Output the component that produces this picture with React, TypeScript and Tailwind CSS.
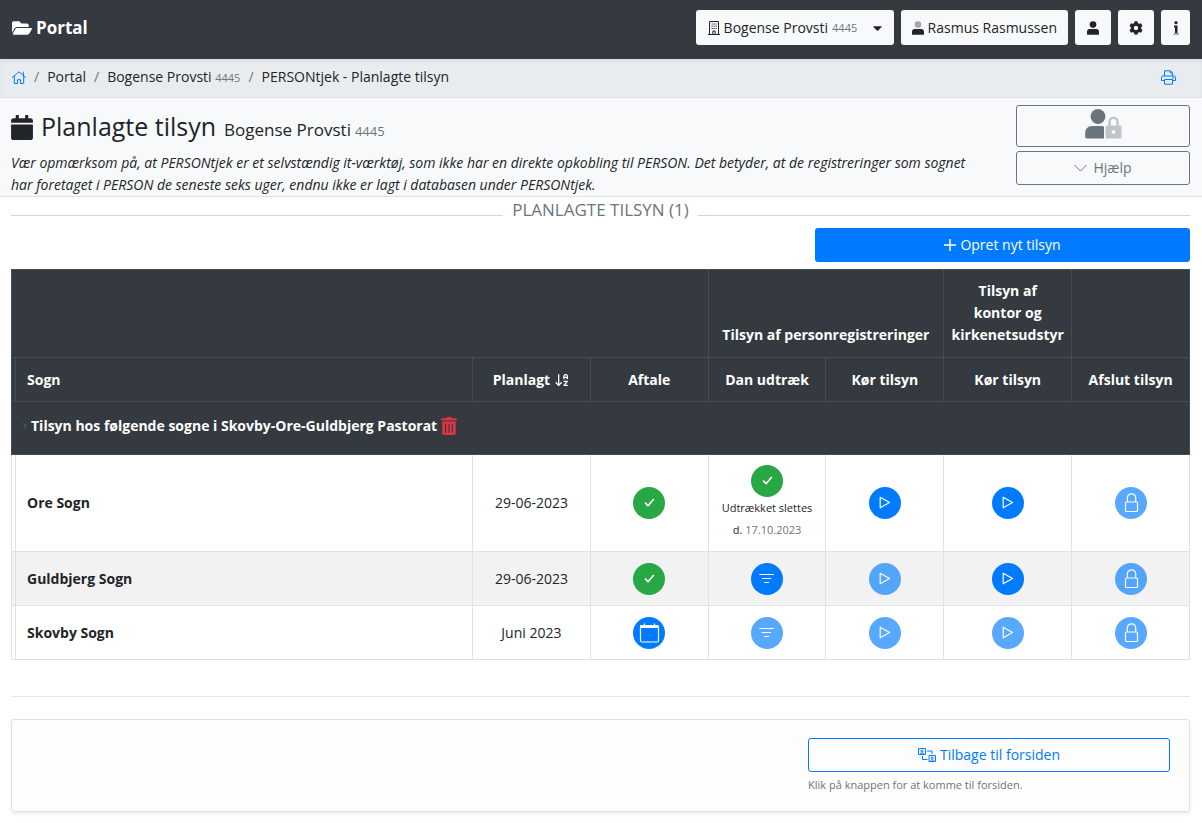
import React from 'react';
import { ArrowDownAZ } from 'lucide-react';
import { FaCalendar, FaCaretDown, FaCog, FaFolderOpen, FaTrashAlt } from 'react-icons/fa';

type ActionKind = 'check' | 'filter' | 'calendar' | 'play' | 'lock';

interface Action {
  kind: ActionKind;
  label: string;
  disabled?: boolean;
  note?: string;
}

interface Parish {
  name: string;
  planned: string;
  actions: Action[];
}

const parishes: Parish[] = [
  {
    name: 'Ore Sogn',
    planned: '29-06-2023',
    actions: [
      { kind: 'check', label: 'Aftale' },
      { kind: 'check', label: 'Dan udtræk', note: '17.10.2023' },
      { kind: 'play', label: 'Kør tilsyn af personregistreringer' },
      { kind: 'play', label: 'Kør tilsyn af kontor' },
      { kind: 'lock', label: 'Afslut tilsyn', disabled: true },
    ],
  },
  {
    name: 'Guldbjerg Sogn',
    planned: '29-06-2023',
    actions: [
      { kind: 'check', label: 'Aftale' },
      { kind: 'filter', label: 'Dan udtræk' },
      { kind: 'play', label: 'Kør tilsyn af personregistreringer', disabled: true },
      { kind: 'play', label: 'Kør tilsyn af kontor' },
      { kind: 'lock', label: 'Afslut tilsyn', disabled: true },
    ],
  },
  {
    name: 'Skovby Sogn',
    planned: 'Juni 2023',
    actions: [
      { kind: 'calendar', label: 'Aftale' },
      { kind: 'filter', label: 'Dan udtræk', disabled: true },
      { kind: 'play', label: 'Kør tilsyn af personregistreringer', disabled: true },
      { kind: 'play', label: 'Kør tilsyn af kontor', disabled: true },
      { kind: 'lock', label: 'Afslut tilsyn', disabled: true },
    ],
  },
];

const UserIcon = ({ className, head = 'currentColor' }: { className: string; head?: string }) => (
  <svg viewBox="0 0 448 512" className={className} fill="currentColor" aria-hidden="true">
    <circle cx="224" cy="128" r="124" fill={head} />
    <path d="M352 290H96c-53 0-96 43-96 96v94a32 32 0 0 0 32 32h384a32 32 0 0 0 32-32v-94c0-53-43-96-96-96z" />
  </svg>
);

const UserLockIcon = () => (
  <svg viewBox="0 0 37 30" className="h-[30px] w-[37px]" aria-hidden="true">
    <circle cx="13" cy="7.5" r="7.4" fill="#6c757d" />
    <path d="M6.5 17h10c1 0 1.8.2 2.500.5V29.500H2A1.800 1.800 0 0 1 .2 27.700V23.500A6.500 6.500 0 0 1 6.500 17z" fill="#6c757d" />
    <path d="M24.500 17v-4.200a4 4 0 0 1 8 0V17" fill="none" stroke="#c0c4c9" strokeWidth="2.400" />
    <path d="M22 16.500h13a1.500 1.500 0 0 1 1.500 1.500v10a1.500 1.500 0 0 1-1.500 1.500H22a1.500 1.500 0 0 1-1.500-1.500V18a1.500 1.500 0 0 1 1.500-1.500z" fill="#c0c4c9" />
    <circle cx="28.500" cy="23" r="2" fill="#f8f9fa" />
  </svg>
);

const BuildingIcon = () => (
  <svg viewBox="0 0 12 14" className="h-[14px] w-3 shrink-0" fill="none" stroke="currentColor" aria-hidden="true">
    <path d="M1.500 13V.5h9V13M0 13.500h12M4.900 13v-3h2.200v3" />
    <path d="M3.500 3h1.200M5.500 3h1.200M7.500 3h1.200M3.500 5.200h1.200M5.500 5.200h1.200M7.500 5.200h1.200M3.500 7.500h1.200M5.500 7.500h1.200M7.500 7.500h1.200" />
  </svg>
);

const InfoIcon = () => (
  <svg viewBox="0 0 6 14" className="h-[14px] w-[6px]" aria-hidden="true">
    <path d="M1 4.500h3.500V12H2V6.500H1z" fill="#212529" />
    <circle cx="3" cy="1.700" r="1.600" fill="#212529" />
    <path d="M.5 12H6v2H.5z" fill="#a5a7a9" />
  </svg>
);

const HomeIcon = () => (
  <svg viewBox="0 0 14 13" className="h-[13px] w-[14px]" fill="none" stroke="currentColor" strokeLinejoin="round" strokeLinecap="round" aria-hidden="true">
    <path d="M.5 6.300 7 .8l6.500 5.500M2.300 5v7.500h3.200V8.700h3v3.800h3.200V5M11.300 1v2.800" />
  </svg>
);

const PrintIcon = () => (
  <svg viewBox="0 0 15 15" className="h-[15px] w-[15px]" fill="none" stroke="currentColor" strokeLinejoin="round" aria-hidden="true">
    <path d="M3.500 6V.8h6L11.500 2.800V6M9.300 1v2h2M3.500 10.500h-3V7.500A1.500 1.500 0 0 1 2 6h11a1.500 1.500 0 0 1 1.500 1.500v3h-3M3.500 9.500h8v4.700h-8z" />
    <circle cx="12" cy="8" r=".4" />
  </svg>
);

const SwapIcon = () => (
  <svg viewBox="0 0 18 14" className="h-[14px] w-[18px]" fill="none" stroke="currentColor" aria-hidden="true">
    <path d="M.5.500h7v6h-7zM11 7.500h6.500v6H11zM9 3h5v3M4.500 8v3.500h5" />
    <circle cx="4" cy="3" r="1" />
    <path d="M2 5.700c.8-1 3.200-1 4 0" />
    <circle cx="14.200" cy="10" r="1" />
    <path d="M12.500 12.700c.8-1 2.700-1 3.500 0" />
  </svg>
);

const ActionIcon = ({ kind }: { kind: ActionKind }) => (
  <svg viewBox="0 0 32 32" className="h-8 w-8" fill="none" stroke="currentColor" strokeWidth="1.200" strokeLinejoin="round" aria-hidden="true">
    {kind === 'check' && <path d="m12 15.500 3 3.200 5.800-6.700" strokeWidth="1.700" />}
    {kind === 'filter' && <path d="M8.300 11.500h14.400M10.800 15.500h9.400M13.200 19.500h4.800" />}
    {kind === 'play' && <path d="M11.200 10.200v10.600l9.300-5.300z" />}
    {kind === 'lock' && (
      <>
        <path d="M12.300 15v-4a4 4 0 0 1 8.400 0v4" />
        <rect x="10.500" y="15" width="12" height="9.500" rx="1" />
      </>
    )}
    {kind === 'calendar' && (
      <>
        <rect x="7.500" y="8.500" width="18" height="16.500" rx="1.500" />
        <path d="M7.500 9.500h18" strokeWidth="3" />
        <path d="M11.500 6.500v2M21.500 6.500v2" />
      </>
    )}
  </svg>
);

const ActionButton = ({ action }: { action: Action }) => {
  const color = action.kind === 'check' ? 'bg-[#28a745]' : 'bg-[#007bff]';
  return (
    <button
      type="button"
      aria-label={action.label}
      disabled={action.disabled}
      className={`block h-8 w-8 mx-auto rounded-full text-white disabled:opacity-65 ${color}`}
    >
      <ActionIcon kind={action.kind} />
    </button>
  );
};

const Navbar = () => (
  <nav className="flex min-h-[59px] items-center justify-between bg-[#343a40] px-3 pb-1">
    <a href="#" className="flex items-center gap-1 text-[17px] font-bold text-white">
      <FaFolderOpen className="h-5 w-5" />
      Portal
    </a>
    <div className="flex items-center gap-[7px]">
      <button type="button" aria-haspopup="menu" className="flex h-[35px] w-[198px] items-center rounded-[3px] bg-[#f8f9fa] px-3">
        <BuildingIcon />
        <span className="ml-1">Bogense Provsti</span>
        <span className="ml-1 text-[11px] text-[#6c757d]">4445</span>
        <FaCaretDown className="ml-auto h-[14px] w-[9px]" />
      </button>
      <button type="button" className="flex h-[35px] items-center gap-1 rounded-[3px] bg-[#f8f9fa] px-[11px]">
        <UserIcon className="h-[14px] w-3" head="#a5a7a9" />
        Rasmus Rasmussen
      </button>
      <button type="button" aria-label="Profil" className="flex h-[35px] w-9 items-center justify-center rounded-[3px] bg-[#f8f9fa]">
        <UserIcon className="h-[14px] w-3" />
      </button>
      <button type="button" aria-label="Indstillinger" className="flex h-[35px] w-9 items-center justify-center rounded-[3px] bg-[#f8f9fa]">
        <FaCog className="h-[14px] w-[14px]" />
      </button>
      <button type="button" aria-label="Information" className="flex h-[35px] w-[29px] items-center justify-center rounded-[3px] bg-[#f8f9fa]">
        <InfoIcon />
      </button>
    </div>
  </nav>
);

const Breadcrumb = () => (
  <div className="flex h-[39px] items-center justify-between border-b border-[#dee2e6] bg-[#e9ecef] pr-[26px] pb-[2px] pl-3 shadow-[inset_0_3px_3px_rgba(0,0,0,0.05)]">
    <ol className="flex items-center gap-2">
      <li><a href="#" aria-label="Forside" className="block text-[#007bff]"><HomeIcon /></a></li>
      <li className="text-[#6c757d]">/</li>
      <li><a href="#">Portal</a></li>
      <li className="text-[#6c757d]">/</li>
      <li><a href="#">Bogense Provsti <span className="text-[11px] text-[#6c757d]">4445</span></a></li>
      <li className="text-[#6c757d]">/</li>
      <li>PERSONtjek - Planlagte tilsyn</li>
    </ol>
    <button type="button" aria-label="Udskriv" className="text-[#007bff]"><PrintIcon /></button>
  </div>
);

const PageHeader = () => (
  <header className="flex items-start justify-between gap-5 border-b border-[#dee2e6] bg-[#f8f9fa] pt-[7px] pr-3 pl-[11px]">
    <div className="max-w-[972px]">
      <h1 className="flex h-10 items-baseline pt-[3px] text-[25px] leading-9 font-medium">
        <FaCalendar className="h-[25px] w-[22px] translate-y-1" />
        <span className="ml-2">Planlagte tilsyn</span>
        <span className="ml-2 text-[17px]">Bogense Provsti</span>
        <span className="ml-1 text-[13px] font-normal text-[#6c757d]">4445</span>
      </h1>
      <p className="mt-[7px] italic">
        Vær opmærksom på, at PERSONtjek er et selvstændig it-værktøj, som ikke har en direkte opkobling til PERSON. Det betyder, at de registreringer som sognet har foretaget i PERSON de seneste seks uger, endnu ikke er lagt i databasen under PERSONtjek.
      </p>
    </div>
    <div className="flex w-[174px] shrink-0 flex-col gap-1 text-[#6c757d]">
      <button type="button" aria-label="Brugeradgang" className="flex h-[42px] items-center justify-center rounded-[3px] border border-[#6c757d] pb-1">
        <UserLockIcon />
      </button>
      <button type="button" className="flex h-[34px] items-center justify-center gap-[6px] rounded-[3px] border border-[#6c757d]">
        <svg viewBox="0 0 13 8" className="h-2 w-[13px]" fill="none" stroke="currentColor" aria-hidden="true">
          <path d="m.5 1 6 6 6-6" />
        </svg>
        Hjælp
      </button>
    </div>
  </header>
);

const headCell = 'border border-[#454d55] px-[11px] font-bold';

const InspectionTable = () => (
  <table className="mt-[7px] w-full table-fixed border-collapse text-center">
    <colgroup>
      <col className="w-1" />
      <col />
      <col className="w-[10%]" />
      <col className="w-[10%]" />
      <col className="w-[10%]" />
      <col className="w-[10%]" />
      <col className="w-[128px]" />
      <col className="w-[10%]" />
    </colgroup>
    <thead className="bg-[#343a40] text-white">
      <tr className="h-[88px] align-bottom">
        <td colSpan={4} className={headCell} />
        <th colSpan={2} scope="colgroup" className={`${headCell} pb-[11px]`}>Tilsyn af personregistreringer</th>
        <th scope="colgroup" className="border border-[#454d55] pb-[11px] font-bold">Tilsyn af<br />kontor og<br />kirkenetsudstyr</th>
        <td className={headCell} />
      </tr>
      <tr className="h-11">
        <td className="border border-[#454d55]" />
        <th scope="col" className={`${headCell} text-left`}>Sogn</th>
        <th scope="col" className={headCell}>
          <span className="flex items-center justify-center gap-1">Planlagt <ArrowDownAZ className="h-4 w-4" /></span>
        </th>
        <th scope="col" className={headCell}>Aftale</th>
        <th scope="col" className={headCell}>Dan udtræk</th>
        <th scope="col" className={headCell}>Kør tilsyn</th>
        <th scope="col" className={headCell}>Kør tilsyn</th>
        <th scope="col" className={headCell}>Afslut tilsyn</th>
      </tr>
      <tr className="h-[53px]">
        <th colSpan={8} scope="colgroup" className={`${headCell} pb-1 text-left`}>
          <span className="flex items-center gap-1">
            <svg viewBox="0 0 5 8" className="h-2 w-1" fill="none" stroke="#6c757d" aria-hidden="true">
              <path d="m.5.5 3.500 3.500L.5 7.500" />
            </svg>
            Tilsyn hos følgende sogne i Skovby-Ore-Guldbjerg Pastorat
            <button type="button" aria-label="Slet tilsyn" className="text-[#dc3545]"><FaTrashAlt className="h-[18px] w-4" /></button>
          </span>
        </th>
      </tr>
    </thead>
    <tbody>
      {parishes.map((parish) => (
        <tr key={parish.name} className="h-[54px] even:bg-[#f2f2f2]">
          <td className="border border-[#dee2e6]" />
          <th scope="row" className="border border-[#dee2e6] px-[11px] text-left font-bold">{parish.name}</th>
          <td className="border border-[#dee2e6]">{parish.planned}</td>
          {parish.actions.map((action, index) => (
            <td key={index} className="border border-[#dee2e6] py-[10px]">
              <ActionButton action={action} />
              {action.note && (
                <p className="text-[11px] leading-[22px]">
                  Udtrækket slettes<br />d. <span className="text-[#6c757d]">{action.note}</span>
                </p>
              )}
            </td>
          ))}
        </tr>
      ))}
    </tbody>
  </table>
);

const App = () => (
  <div className="min-h-screen bg-white font-['Open_Sans','Noto_Sans',sans-serif] text-sm leading-[22px] text-[#212529]">
    <Navbar />
    <Breadcrumb />
    <PageHeader />
    <main className="pr-3 pb-3 pl-[11px]">
      <h2 className="flex h-[26px] items-center gap-[9px] text-[17px] text-[#6c757d]">
        <span className="mt-[11px] flex-1 border-t border-[#d3d5d7]" />
        PLANLAGTE TILSYN (1)
        <span className="mt-[11px] flex-1 border-t border-[#d3d5d7]" />
      </h2>
      <div className="mt-[5px] flex justify-end">
        <button type="button" className="flex h-[34px] w-[375px] items-center justify-center gap-1 rounded-[3px] bg-[#007bff] text-white">
          <svg viewBox="0 0 12 12" className="h-3 w-3" stroke="currentColor" strokeWidth="1.500" aria-hidden="true">
            <path d="M6 0v12M0 6h12" />
          </svg>
          Opret nyt tilsyn
        </button>
      </div>
      <InspectionTable />
      <hr className="mt-9 border-[#e5e5e5]" />
      <section className="mt-[22px] flex justify-end rounded-[3px] border border-[#dee2e6] bg-[#fdfdfd] px-[19px] pt-[18px] pb-[15px] shadow-[0_2px_4px_rgba(0,0,0,0.075)]">
        <div className="w-[362px]">
          <button type="button" className="flex h-[34px] w-full items-center justify-center gap-1 rounded-[3px] border border-[#007bff] text-[#007bff]">
            <SwapIcon />
            Tilbage til forsiden
          </button>
          <p className="mt-[2px] text-[11px] leading-[22px] text-[#6c757d]">Klik på knappen for at komme til forsiden.</p>
        </div>
      </section>
    </main>
  </div>
);

export default App;
